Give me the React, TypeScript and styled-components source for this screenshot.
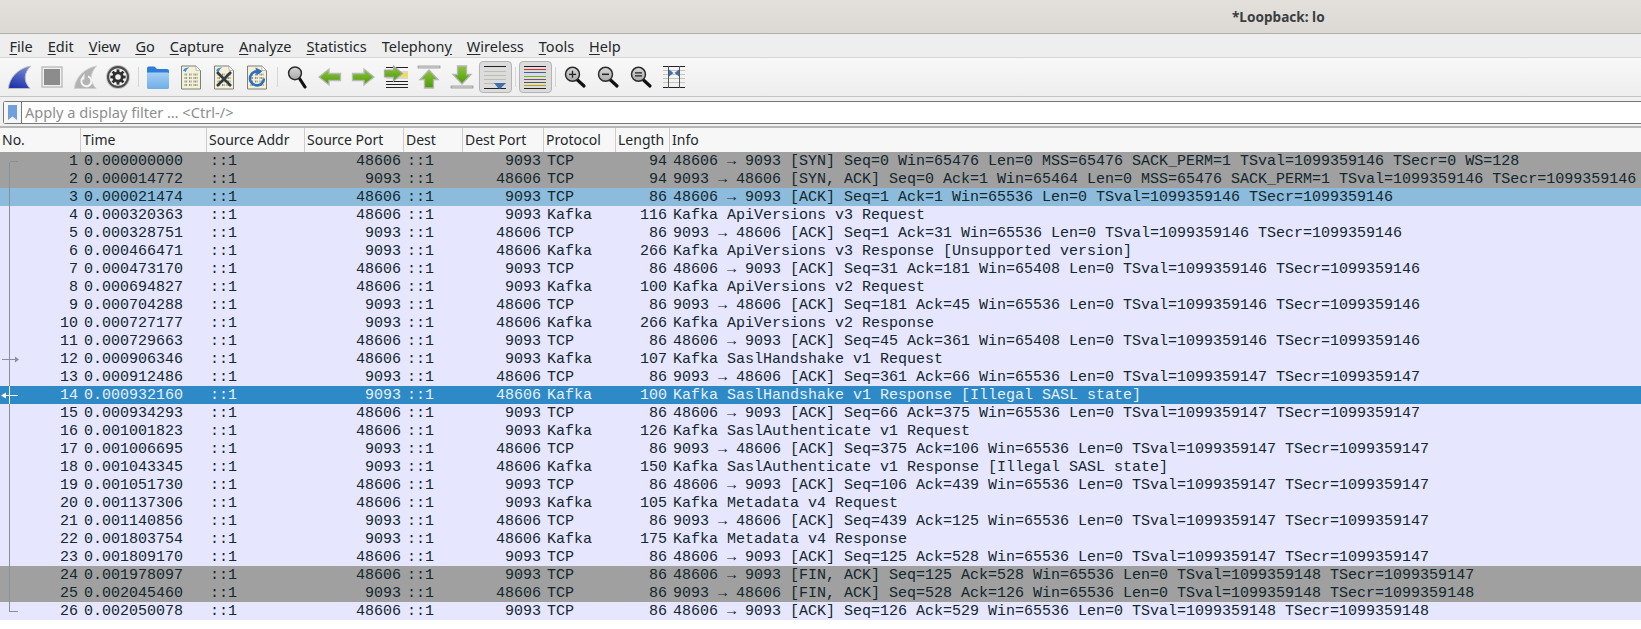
import React from "react";
import styled, { createGlobalStyle } from "styled-components";

const Global = createGlobalStyle`
  html, body { margin: 0; padding: 0; background: #ffffff; overflow: hidden; }
  #root { width: 1641px; height: 629px; overflow: hidden; }
`;

const UI_FONT = `"Noto Sans", "Open Sans", sans-serif`;
const COLS = "81px 126px 98px 99px 59px 81px 72px 54px 1fr";

const Page = styled.div`
  display: flex;
  flex-direction: column;
  width: 1641px;
  height: 629px;
  font-family: ${UI_FONT};
  color: #2e3436;
`;

const TitleBar = styled.header`
  height: 33px;
  flex: none;
  display: flex;
  align-items: center;
  padding-left: 1232px;
  background: linear-gradient(#e3e0dc, #dcd8d3);
  border-bottom: 1px solid #b3afa9;
  font-weight: 700;
  font-size: 13.6px;
  color: #3a3f41;
`;

const MenuBar = styled.nav`
  height: 23px;
  flex: none;
  display: flex;
  align-items: center;
  padding-left: 2px;
  background: #eeeeee;
  border-bottom: 1px solid #d5d5d5;
`;

const MenuItem = styled.span`
  padding: 0 7.5px;
  font-size: 14.5px;
  color: #23282a;
  white-space: nowrap;
  u { text-underline-offset: 2px; }
`;

const ToolBar = styled.div`
  height: 38px;
  flex: none;
  display: flex;
  align-items: center;
  padding-left: 2.5px;
  background: linear-gradient(#f8f8f8, #eeeeee);
  border-bottom: 1px solid #c4c4c4;
`;

const ToolButton = styled.div<{ $on?: boolean }>`
  width: 33px;
  height: 32px;
  flex: none;
  box-sizing: border-box;
  display: flex;
  align-items: center;
  justify-content: center;
  border-radius: 4px;
  border: 1px solid ${(p) => (p.$on ? "#b4b4b4" : "transparent")};
  background: ${(p) => (p.$on ? "#dcdcdc" : "transparent")};
`;

const ToolSep = styled.div`
  width: 7px;
  height: 20px;
  flex: none;
  display: flex;
  justify-content: center;
  &::before { content: ""; width: 1px; background: #d6d6d6; }
`;

const FilterBar = styled.div`
  height: 31px;
  flex: none;
  box-sizing: border-box;
  padding: 4px 0 2px 3px;
  background: #f0f0f0;
  border-bottom: 2px solid #b6b6b6;
`;

const FilterBox = styled.div`
  height: 23px;
  box-sizing: border-box;
  display: flex;
  align-items: stretch;
  background: #ffffff;
  border: 1px solid #777777;
  border-right: none;
  border-radius: 3px 0 0 3px;
`;

const BookmarkCell = styled.div`
  width: 17px;
  flex: none;
  display: flex;
  align-items: center;
  justify-content: center;
  background: #f6f6f6;
  border-right: 1px solid #777777;
`;

const FilterText = styled.span`
  padding-left: 3px;
  font-size: 14.6px;
  line-height: 21px;
  color: #8c8f90;
`;

const HeaderRow = styled.div`
  height: 24px;
  flex: none;
  display: grid;
  grid-template-columns: ${COLS};
  background: #f7f7f7;
`;

const HeaderCell = styled.div`
  box-sizing: border-box;
  padding-left: 2px;
  font-size: 14px;
  line-height: 23px;
  color: #23282a;
  white-space: nowrap;
  overflow: hidden;
  border-right: 1px solid #cdcdcd;
  &:last-child { border-right: none; }
`;

const ROW_THEMES = {
  plain: { bg: "#e7e6ff", fg: "#12272e" },
  gray: { bg: "#a0a0a0", fg: "#12272e" },
  related: { bg: "#8dbbdc", fg: "#12272e" },
  selected: { bg: "#2e8ac6", fg: "#e7f0ff" },
};
type RowKind = keyof typeof ROW_THEMES;

const PacketRow = styled.div<{ $kind: RowKind }>`
  height: 18px;
  display: grid;
  grid-template-columns: ${COLS};
  grid-template-rows: 18px;
  background: ${(p) => ROW_THEMES[p.$kind].bg};
  color: ${(p) => ROW_THEMES[p.$kind].fg};
  font-family: "Liberation Mono", monospace;
  font-size: 15px;
  line-height: 18px;
`;

const Cell = styled.div<{ $right?: boolean }>`
  position: relative;
  box-sizing: border-box;
  padding: 1px 3px 0;
  text-align: ${(p) => (p.$right ? "right" : "left")};
  white-space: pre;
  overflow: hidden;
`;

const MarkSvg = styled.svg`
  position: absolute;
  left: 0;
  top: 0;
`;

type Mark = "first" | "mid" | "last" | "req" | "res";

function RelationMark({ kind, selected }: { kind: Mark; selected: boolean }) {
  const c = selected ? "#ffffff" : "#8a8f98";
  return (
    <MarkSvg width="24" height="18" viewBox="0 0 24 18" fill="none" stroke={c} strokeWidth="1" shapeRendering="crispEdges">
      {kind === "first" && <path d="M9.5 9.5H18M9.5 9.5V18" />}
      {kind === "last" && <path d="M9.5 0V9.5H18" />}
      {(kind === "mid" || kind === "req" || kind === "res") && <path d="M9.5 0V18" />}
      {kind === "req" && (
        <>
          <path d="M2 9.5H16" />
          <path d="M15 6.5L19 9.5L15 12.5Z" fill={c} stroke="none" shapeRendering="auto" />
        </>
      )}
      {kind === "res" && (
        <>
          <path d="M5 9.5H18" />
          <path d="M6 6.5L1 9.5L6 12.5Z" fill={c} stroke="none" shapeRendering="auto" />
        </>
      )}
    </MarkSvg>
  );
}

const IconSvg = styled.svg`
  display: block;
  flex: none;
`;

const Svg = ({ children }: { children: React.ReactNode }) => (
  <IconSvg width="26" height="26" viewBox="0 0 26 26">{children}</IconSvg>
);

const SharkFin = () => (
  <Svg>
    <defs>
      <linearGradient id="fin" x1="0.6" y1="0" x2="0.3" y2="1">
        <stop offset="0" stopColor="#6f86d8" />
        <stop offset="1" stopColor="#1d31a8" />
      </linearGradient>
    </defs>
    <path d="M2.5 24.5C3 14 12 4.5 24.5 2C18 9 17 17 24 24.5Z" fill="url(#fin)" stroke="#bdbdbd" strokeWidth="1" />
  </Svg>
);

const StopIcon = () => (
  <Svg>
    <rect x="3" y="3" width="20" height="20" fill="#f0f0f0" stroke="#bcbcbc" strokeWidth="1.4" />
    <rect x="5" y="5" width="16" height="16" fill="#8c8c8c" />
  </Svg>
);

const RestartFin = () => (
  <Svg>
    <path d="M2.5 24.5C3 14 12 4.5 24.5 2C18 9 17 17 24 24.5Z" fill="#b3b3b3" stroke="#cfcfcf" strokeWidth="1" />
    <path d="M16 12.5A5 5 0 1 1 10.2 14.5" fill="none" stroke="#f4f4f4" strokeWidth="2" />
    <path d="M12.5 9.5V15.5H8.5Z" fill="#f4f4f4" />
  </Svg>
);

const teeth = Array.from({ length: 8 }, (_, i) => i * 45);
const GearIcon = () => (
  <Svg>
    <circle cx="13" cy="13" r="12" fill="#c4c4c4" />
    <circle cx="13" cy="13" r="11" fill="#4c4c4c" />
    <circle cx="13" cy="13" r="8.8" fill="#f0f0f0" />
    {teeth.map((a) => (
      <rect key={a} x="11.6" y="5.4" width="2.8" height="3" fill="#2e2e2e" transform={`rotate(${a} 13 13)`} />
    ))}
    <circle cx="13" cy="13" r="5.6" fill="#2e2e2e" />
    <circle cx="13" cy="13" r="2.8" fill="#f0f0f0" />
  </Svg>
);

const FolderIcon = () => (
  <Svg>
    <defs>
      <linearGradient id="fold" x1="0" y1="0" x2="0" y2="1">
        <stop offset="0" stopColor="#a5cff3" />
        <stop offset="1" stopColor="#6eaee9" />
      </linearGradient>
    </defs>
    <path d="M2 4.5C2 3 3 2.5 4 2.5H9.5L12 5H22C23.5 5 24 6 24 7V12H2Z" fill="#2e7ed9" />
    <path d="M2 8.5H22.5C23.5 8.5 24 9 24 10V23C24 24.5 23.3 25 22 25H4C2.7 25 2 24.5 2 23Z" fill="url(#fold)" />
  </Svg>
);

const DocBase = ({ swirl = true }: { swirl?: boolean }) => (
  <>
    <path d="M3.5 2H18L22.5 6.5V25H3.5Z" fill="#f4f1d6" stroke="#7f7f7f" strokeWidth="1" />
    <path d="M18 2V6.5H22.5Z" fill="#ffffff" stroke="#9a9a9a" strokeWidth="0.6" />
    {swirl && <path d="M5 7C6 3.8 9 3.2 11.5 3.5C9.5 4.5 8 6 8 8C7 7.2 6 7 5 7Z" fill="#3f8fe0" />}
    {[10.5, 14, 17.5, 21].map((y) => (
      <path key={y} d="M6.5 0H9.5M11 0H14M15.5 0H19.5" transform={`translate(0 ${y})`} stroke="#8d8f8a" strokeWidth="2" strokeDasharray="1 .6" fill="none" />
    ))}
  </>
);

const FileIcon = () => (
  <Svg>
    <DocBase />
  </Svg>
);

const CloseIcon = () => (
  <Svg>
    <DocBase />
    <path d="M6 8L20 22M20 8L6 22" stroke="#363b3b" strokeWidth="2.6" fill="none" />
  </Svg>
);

const ReloadIcon = () => (
  <Svg>
    <DocBase swirl={false} />
    <path d="M16.5 8.3A7 7 0 1 0 20 14.5" fill="none" stroke="#2f6fc0" strokeWidth="2.6" />
    <path d="M11.5 3.5L18.5 7L12.5 11.5Z" fill="#2f6fc0" />
  </Svg>
);

const LensDefs = () => (
  <defs>
    <linearGradient id="lens" x1="0" y1="0" x2="0" y2="1">
      <stop offset="0" stopColor="#d8d8d8" />
      <stop offset="1" stopColor="#a8a8a8" />
    </linearGradient>
  </defs>
);

const FindIcon = () => (
  <Svg>
    <LensDefs />
    <path d="M15.5 14.5L21 23" stroke="#111111" strokeWidth="3.2" strokeLinecap="round" />
    <circle cx="11" cy="9.3" r="6.4" fill="url(#lens)" stroke="#2b2b2b" strokeWidth="1.5" />
  </Svg>
);

const ZoomLens = ({ children }: { children: React.ReactNode }) => (
  <Svg>
    <LensDefs />
    <path d="M15.5 16L22 22" stroke="#111111" strokeWidth="3.2" strokeLinecap="round" />
    <circle cx="10.5" cy="10.3" r="7" fill="url(#lens)" stroke="#2b2b2b" strokeWidth="1.5" />
    {children}
  </Svg>
);

const GreenDefs = () => (
  <defs>
    <linearGradient id="gr" x1="0" y1="0" x2="0" y2="1">
      <stop offset="0" stopColor="#8cc63f" />
      <stop offset="1" stopColor="#4e9a06" />
    </linearGradient>
  </defs>
);

const BackIcon = () => (
  <Svg>
    <GreenDefs />
    <path d="M2 13L12 5V9.5H23.5V16.5H12V21Z" fill="url(#gr)" stroke="#b9b9b9" strokeWidth="1.3" />
  </Svg>
);

const ForwardIcon = () => (
  <Svg>
    <GreenDefs />
    <path d="M24 13L14 5V9.5H2.5V16.5H14V21Z" fill="url(#gr)" stroke="#b9b9b9" strokeWidth="1.3" />
  </Svg>
);

const GotoIcon = () => (
  <Svg>
    <GreenDefs />
    <path d="M3 3.5H25M3 20.5H25M3 23.5H25M3 17.5H25" stroke="#222222" strokeWidth="1" />
    <path d="M3 8H25M3 14H25" stroke="#bdbdbd" strokeWidth="1" />
    <rect x="17" y="9" width="8" height="4" fill="#f2df4a" />
    <path d="M19.5 9.5L10.5 2V6H1.5V13H10.5V17Z" fill="url(#gr)" stroke="#a8a8a8" strokeWidth="1.2" />
  </Svg>
);

const TopIcon = () => (
  <Svg>
    <GreenDefs />
    <rect x="2" y="2" width="22" height="2" fill="#dcdcdc" stroke="#777777" strokeWidth="0.6" />
    <path d="M13 6L22 15.5H17.5V24H8.5V15.5H4Z" fill="url(#gr)" stroke="#b5b5b5" strokeWidth="1.3" />
  </Svg>
);

const BottomIcon = () => (
  <Svg>
    <GreenDefs />
    <rect x="2" y="22" width="22" height="2" fill="#dcdcdc" stroke="#777777" strokeWidth="0.6" />
    <path d="M13 20L22 10.5H17.5V2H8.5V10.5H4Z" fill="url(#gr)" stroke="#b5b5b5" strokeWidth="1.3" />
  </Svg>
);

const AutoScrollIcon = () => (
  <Svg>
    <path d="M2 2.5H24M2 24.5H24" stroke="#222222" strokeWidth="1" />
    <path d="M2 7.5H24M2 11.5H24M2 15.5H24M2 19.5H24" stroke="#bdbdb0" strokeWidth="1" />
    <path d="M12 19H24L18.5 24.5H16.5Z" fill="#3f6fb0" />
  </Svg>
);

const COLOR_LINES: Array<[number, string]> = [
  [2.5, "#222222"], [5.5, "#d92b2b"], [8.5, "#3465a4"], [12.5, "#7ab317"],
  [15.5, "#75507b"], [18.5, "#555555"], [21.5, "#c49a00"], [24.5, "#222222"],
];
const ColorIcon = () => (
  <Svg>
    {COLOR_LINES.map(([y, c]) => (
      <path key={y} d={`M2 ${y}H24`} stroke={c} strokeWidth="1" />
    ))}
  </Svg>
);

const ResizeIcon = () => (
  <Svg>
    <path d="M2 2.5H24M2 23.5H24" stroke="#222222" strokeWidth="1" />
    <path d="M2 6.5H24M2 10.5H24M2 14.5H24M2 18.5H24" stroke="#c4c4b8" strokeWidth="1" />
    <path d="M7.5 2V24M18.5 2V24" stroke="#555555" strokeWidth="1" />
    <path d="M8 5.5L12.5 9L8 12.5Z" fill="#3f6fb0" />
    <path d="M18 5.5L13.5 9L18 12.5Z" fill="#3f6fb0" />
  </Svg>
);

const TOOLBAR: Array<React.ReactNode | "sep"> = [
  <SharkFin />, <StopIcon />, <RestartFin />, <GearIcon />, "sep",
  <FolderIcon />, <FileIcon />, <CloseIcon />, <ReloadIcon />, "sep",
  <FindIcon />, <BackIcon />, <ForwardIcon />, <GotoIcon />, <TopIcon />, <BottomIcon />,
  "on:auto", "sep", "on:color", "sep",
  <ZoomLens><path d="M7 10.3H14M10.5 6.8V13.8" stroke="#222" strokeWidth="1.3" /></ZoomLens>,
  <ZoomLens><path d="M7 10.3H14" stroke="#222" strokeWidth="1.5" /></ZoomLens>,
  <ZoomLens><path d="M7 8.8H14M7 11.8H14" stroke="#222" strokeWidth="1.3" /></ZoomLens>,
  <ResizeIcon />,
];

const MENUS: Array<[string, string, string]> = [
  ["", "F", "ile"], ["", "E", "dit"], ["", "V", "iew"], ["", "G", "o"],
  ["", "C", "apture"], ["", "A", "nalyze"], ["", "S", "tatistics"],
  ["Telephon", "y", ""], ["", "W", "ireless"], ["", "T", "ools"], ["", "H", "elp"],
];

const HEADERS = ["No.", "Time", "Source Addr", "Source Port", "Dest", "Dest Port", "Protocol", "Length", "Info"];

const A = "48606", B = "9093";
type P = [string, string, string, string, number, string];
const PACKETS: P[] = [
  ["0.000000000", A, B, "TCP", 94, "48606 → 9093 [SYN] Seq=0 Win=65476 Len=0 MSS=65476 SACK_PERM=1 TSval=1099359146 TSecr=0 WS=128"],
  ["0.000014772", B, A, "TCP", 94, "9093 → 48606 [SYN, ACK] Seq=0 Ack=1 Win=65464 Len=0 MSS=65476 SACK_PERM=1 TSval=1099359146 TSecr=1099359146"],
  ["0.000021474", A, B, "TCP", 86, "48606 → 9093 [ACK] Seq=1 Ack=1 Win=65536 Len=0 TSval=1099359146 TSecr=1099359146"],
  ["0.000320363", A, B, "Kafka", 116, "Kafka ApiVersions v3 Request"],
  ["0.000328751", B, A, "TCP", 86, "9093 → 48606 [ACK] Seq=1 Ack=31 Win=65536 Len=0 TSval=1099359146 TSecr=1099359146"],
  ["0.000466471", B, A, "Kafka", 266, "Kafka ApiVersions v3 Response [Unsupported version]"],
  ["0.000473170", A, B, "TCP", 86, "48606 → 9093 [ACK] Seq=31 Ack=181 Win=65408 Len=0 TSval=1099359146 TSecr=1099359146"],
  ["0.000694827", A, B, "Kafka", 100, "Kafka ApiVersions v2 Request"],
  ["0.000704288", B, A, "TCP", 86, "9093 → 48606 [ACK] Seq=181 Ack=45 Win=65536 Len=0 TSval=1099359146 TSecr=1099359146"],
  ["0.000727177", B, A, "Kafka", 266, "Kafka ApiVersions v2 Response"],
  ["0.000729663", A, B, "TCP", 86, "48606 → 9093 [ACK] Seq=45 Ack=361 Win=65408 Len=0 TSval=1099359146 TSecr=1099359146"],
  ["0.000906346", A, B, "Kafka", 107, "Kafka SaslHandshake v1 Request"],
  ["0.000912486", B, A, "TCP", 86, "9093 → 48606 [ACK] Seq=361 Ack=66 Win=65536 Len=0 TSval=1099359147 TSecr=1099359147"],
  ["0.000932160", B, A, "Kafka", 100, "Kafka SaslHandshake v1 Response [Illegal SASL state]"],
  ["0.000934293", A, B, "TCP", 86, "48606 → 9093 [ACK] Seq=66 Ack=375 Win=65536 Len=0 TSval=1099359147 TSecr=1099359147"],
  ["0.001001823", A, B, "Kafka", 126, "Kafka SaslAuthenticate v1 Request"],
  ["0.001006695", B, A, "TCP", 86, "9093 → 48606 [ACK] Seq=375 Ack=106 Win=65536 Len=0 TSval=1099359147 TSecr=1099359147"],
  ["0.001043345", B, A, "Kafka", 150, "Kafka SaslAuthenticate v1 Response [Illegal SASL state]"],
  ["0.001051730", A, B, "TCP", 86, "48606 → 9093 [ACK] Seq=106 Ack=439 Win=65536 Len=0 TSval=1099359147 TSecr=1099359147"],
  ["0.001137306", A, B, "Kafka", 105, "Kafka Metadata v4 Request"],
  ["0.001140856", B, A, "TCP", 86, "9093 → 48606 [ACK] Seq=439 Ack=125 Win=65536 Len=0 TSval=1099359147 TSecr=1099359147"],
  ["0.001803754", B, A, "Kafka", 175, "Kafka Metadata v4 Response"],
  ["0.001809170", A, B, "TCP", 86, "48606 → 9093 [ACK] Seq=125 Ack=528 Win=65536 Len=0 TSval=1099359147 TSecr=1099359147"],
  ["0.001978097", A, B, "TCP", 86, "48606 → 9093 [FIN, ACK] Seq=125 Ack=528 Win=65536 Len=0 TSval=1099359148 TSecr=1099359147"],
  ["0.002045460", B, A, "TCP", 86, "9093 → 48606 [FIN, ACK] Seq=528 Ack=126 Win=65536 Len=0 TSval=1099359148 TSecr=1099359148"],
  ["0.002050078", A, B, "TCP", 86, "48606 → 9093 [ACK] Seq=126 Ack=529 Win=65536 Len=0 TSval=1099359148 TSecr=1099359148"],
];

function rowKind(no: number): RowKind {
  if (no === 14) return "selected";
  if (no === 3) return "related";
  if (no === 1 || no === 2 || no === 24 || no === 25) return "gray";
  return "plain";
}

function markOf(no: number): Mark {
  if (no === 1) return "first";
  if (no === 26) return "last";
  if (no === 12) return "req";
  if (no === 14) return "res";
  return "mid";
}

export default function App() {
  return (
    <Page>
      <Global />
      <TitleBar>*Loopback: lo</TitleBar>
      <MenuBar>
        {MENUS.map(([pre, key, post]) => (
          <MenuItem key={pre + key + post}>
            {pre}<u>{key}</u>{post}
          </MenuItem>
        ))}
      </MenuBar>
      <ToolBar>
        {TOOLBAR.map((item, i) =>
          item === "sep" ? (
            <ToolSep key={i} />
          ) : item === "on:auto" ? (
            <ToolButton key={i} $on><AutoScrollIcon /></ToolButton>
          ) : item === "on:color" ? (
            <ToolButton key={i} $on><ColorIcon /></ToolButton>
          ) : (
            <ToolButton key={i}>{item}</ToolButton>
          )
        )}
      </ToolBar>
      <FilterBar>
        <FilterBox>
          <BookmarkCell>
            <svg width="9" height="15" viewBox="0 0 9 15">
              <path d="M0 0H9V15L4.5 11.5L0 15Z" fill="#6f9fdc" />
            </svg>
          </BookmarkCell>
          <FilterText>Apply a display filter … &lt;Ctrl-/&gt;</FilterText>
        </FilterBox>
      </FilterBar>
      <HeaderRow>
        {HEADERS.map((h) => (
          <HeaderCell key={h}>{h}</HeaderCell>
        ))}
      </HeaderRow>
      {PACKETS.map(([time, sp, dp, proto, len, info], i) => {
        const no = i + 1;
        const kind = rowKind(no);
        return (
          <PacketRow key={no} $kind={kind}>
            <Cell $right>
              <RelationMark kind={markOf(no)} selected={kind === "selected"} />
              {no}
            </Cell>
            <Cell>{time}</Cell>
            <Cell>::1</Cell>
            <Cell $right>{sp}</Cell>
            <Cell>::1</Cell>
            <Cell $right>{dp}</Cell>
            <Cell>{proto}</Cell>
            <Cell $right>{len}</Cell>
            <Cell>{info}</Cell>
          </PacketRow>
        );
      })}
    </Page>
  );
}
